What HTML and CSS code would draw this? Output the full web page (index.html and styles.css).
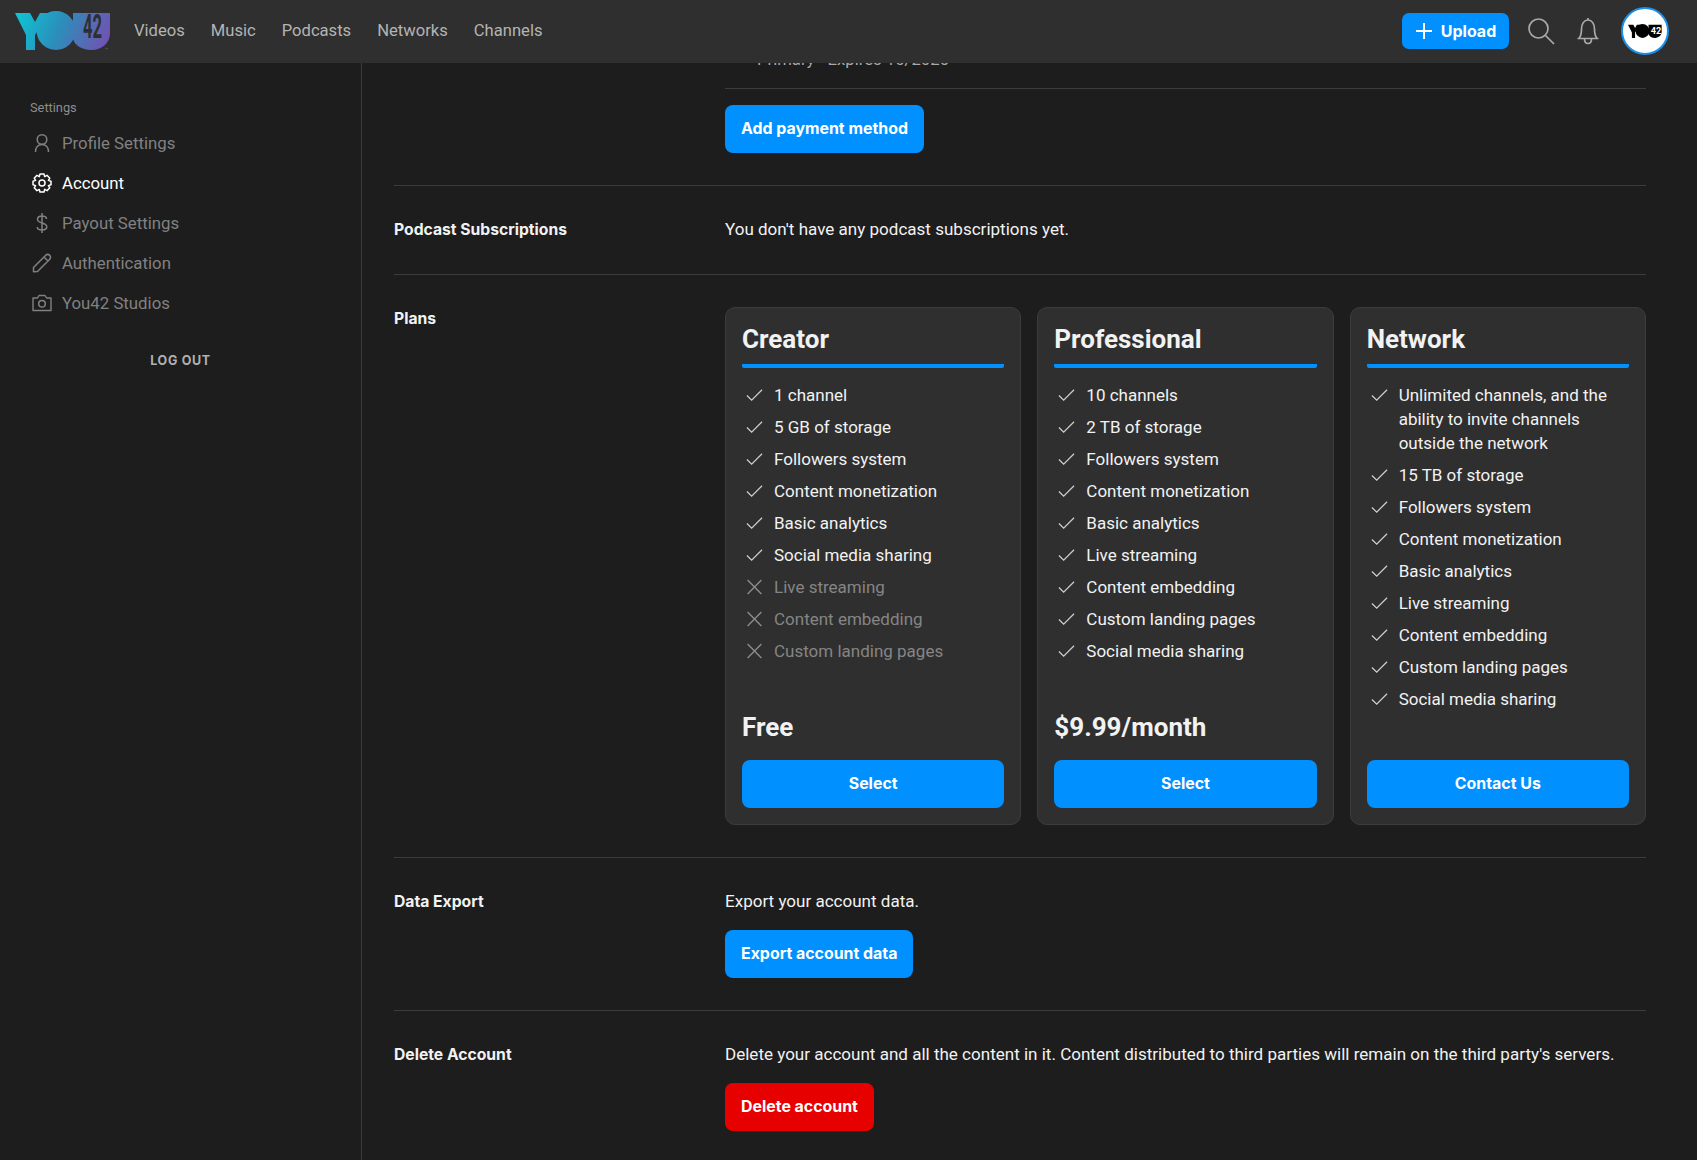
FILE: index.html
```html
<!DOCTYPE html>
<html lang="en">
<head>
<meta charset="utf-8">
<title>Account</title>
<link rel="stylesheet" href="styles.css">
</head>
<body>
<svg class="defs" width="0" height="0" aria-hidden="true">
  <symbol id="check" viewBox="0 0 18 14"><path d="M1 7.5 6 12.5 17 1.5" fill="none" stroke="currentColor" stroke-width="1.3"/></symbol>
  <symbol id="cross" viewBox="0 0 16 16"><path d="M1.5 1.5 14.5 14.5M14.5 1.5 1.5 14.5" fill="none" stroke="currentColor" stroke-width="1.3"/></symbol>
  <symbol id="you" viewBox="0 0 96 40">
    <path d="M0 2H15L20 11 25 2H34L20 24V39H11V24Z"/>
    <circle cx="41" cy="19.5" r="19.5"/>
    <path d="M58 2H95V22C95 32 87 39 76 39 68 39 60 35 58 28Z"/>
  </symbol>
</svg>
<header class="topbar">
  <a class="logo" href="#" aria-label="You42">
    <svg width="96" height="50" viewBox="0 -8 96 50">
      <defs><linearGradient id="lg" gradientUnits="userSpaceOnUse" x1="0" y1="0" x2="96" y2="40"><stop offset="0" stop-color="#0cc8d6"/><stop offset="0.45" stop-color="#2b8fbb"/><stop offset="1" stop-color="#7a4bb0"/></linearGradient></defs>
      <use href="#you" width="96" height="40" fill="url(#lg)"/>
      <text class="logo-num" x="68" y="27" textLength="19" lengthAdjust="spacingAndGlyphs">42</text>
      <text class="logo-tm" x="90" y="40">™</text>
    </svg>
  </a>
  <nav class="topnav">
    <a href="#">Videos</a>
    <a href="#">Music</a>
    <a href="#">Podcasts</a>
    <a href="#">Networks</a>
    <a href="#">Channels</a>
  </nav>
  <div class="top-actions">
    <a class="upload" href="#">
      <svg width="18" height="18" viewBox="0 0 18 18"><path d="M9 1V17M1 9H17" stroke="#fff" stroke-width="2" fill="none"/></svg>
      Upload
    </a>
    <svg class="top-icon" width="28" height="28" viewBox="0 0 28 28"><circle cx="11.5" cy="11.5" r="9.500" fill="none" stroke="#aaa" stroke-width="1.700"/><path d="M18.500 18.500 27 27" stroke="#aaa" stroke-width="1.700" fill="none"/></svg>
    <svg class="top-icon" width="24" height="28" viewBox="0 0 24 28"><path d="M3 21.500C5 19 5.500 16 5.500 12 5.500 7 8 3 12 3S18.500 7 18.500 12C18.500 16 19 19 21 21.500ZM1.500 21.500H22.500M8.500 22C8.500 25 10 26.500 12 26.500S15.500 25 15.500 22M12 1V3" fill="none" stroke="#aaa" stroke-width="1.700"/></svg>
    <div class="avatar">
      <svg width="34" height="15" viewBox="0 0 96 42"><use href="#you" width="96" height="40" fill="#000"/><text class="avatar-num" x="64" y="28">42</text></svg>
    </div>
  </div>
</header>
<div class="shell">
  <aside class="sidebar">
    <div class="side-title">Settings</div>
    <ul class="side-list">
      <li><svg width="20" height="20" viewBox="0 0 20 20"><circle cx="10" cy="6.500" r="4.800" fill="none" stroke="currentColor" stroke-width="1.500"/><path d="M3.500 19C3.500 14.500 6 11.500 10 11.500S16.500 14.500 16.500 19" fill="none" stroke="currentColor" stroke-width="1.500"/></svg>Profile Settings</li>
      <li class="active"><svg width="20" height="20" viewBox="0 0 20 20"><circle cx="10" cy="10" r="3" fill="none" stroke="currentColor" stroke-width="1.500"/><path d="M8 1H12L12.700 3.600 15 2.300 17.800 5.200 16.400 7.400 19 8.200V11.800L16.400 12.600 17.800 14.800 15 17.700 12.700 16.400 12 19H8L7.300 16.400 5 17.700 2.200 14.800 3.600 12.600 1 11.800V8.200L3.600 7.400 2.200 5.200 5 2.300 7.300 3.600Z" fill="none" stroke="currentColor" stroke-width="1.500" stroke-linejoin="round"/></svg>Account</li>
      <li><svg width="20" height="20" viewBox="0 0 20 20"><path d="M14.500 6C14.500 4 12.500 3 10 3S5.500 4.200 5.500 6.300 7.500 9.300 10 10 14.800 11.500 14.800 13.800 12.500 17 10 17 5.300 16 5.300 14M10 0V20" fill="none" stroke="currentColor" stroke-width="1.500"/></svg>Payout Settings</li>
      <li><svg width="20" height="20" viewBox="0 0 20 20"><path d="M1.500 14.500 13.500 2.500C14.800 1.200 16.500 1.200 17.700 2.400S18.800 5.200 17.500 6.500L5.500 18.500 1.500 18.800ZM12 4 16 8" fill="none" stroke="currentColor" stroke-width="1.500" stroke-linejoin="round"/></svg>Authentication</li>
      <li><svg width="20" height="20" viewBox="0 0 20 20"><path d="M1 5H5.500L7 2.500H13L14.500 5H19V17.500H1Z" fill="none" stroke="currentColor" stroke-width="1.400" stroke-linejoin="round"/><circle cx="10" cy="10.800" r="3.300" fill="none" stroke="currentColor" stroke-width="1.500"/></svg>You42 Studios</li>
    </ul>
    <a class="logout" href="#">LOG OUT</a>
  </aside>
  <main class="main">
    <div class="payment-tail">
      <div class="card-meta">Primary - Expires 10/2025</div>
      <div class="tail-rule"></div>
      <a class="btn" href="#">Add payment method</a>
    </div>
    <section class="row">
      <h3 class="row-label">Podcast Subscriptions</h3>
      <div class="row-body"><p class="row-text">You don't have any podcast subscriptions yet.</p></div>
    </section>
    <section class="row">
      <h3 class="row-label">Plans</h3>
      <div class="row-body plans">
        <article class="plan">
          <h2 class="plan-name">Creator</h2>
          <ul class="features">
            <li><svg class="ico"><use href="#check"/></svg>1 channel</li>
            <li><svg class="ico"><use href="#check"/></svg>5 GB of storage</li>
            <li><svg class="ico"><use href="#check"/></svg>Followers system</li>
            <li><svg class="ico"><use href="#check"/></svg>Content monetization</li>
            <li><svg class="ico"><use href="#check"/></svg>Basic analytics</li>
            <li><svg class="ico"><use href="#check"/></svg>Social media sharing</li>
            <li class="off"><svg class="ico"><use href="#cross"/></svg>Live streaming</li>
            <li class="off"><svg class="ico"><use href="#cross"/></svg>Content embedding</li>
            <li class="off"><svg class="ico"><use href="#cross"/></svg>Custom landing pages</li>
          </ul>
          <div class="price">Free</div>
          <a class="btn btn-wide" href="#">Select</a>
        </article>
        <article class="plan">
          <h2 class="plan-name">Professional</h2>
          <ul class="features">
            <li><svg class="ico"><use href="#check"/></svg>10 channels</li>
            <li><svg class="ico"><use href="#check"/></svg>2 TB of storage</li>
            <li><svg class="ico"><use href="#check"/></svg>Followers system</li>
            <li><svg class="ico"><use href="#check"/></svg>Content monetization</li>
            <li><svg class="ico"><use href="#check"/></svg>Basic analytics</li>
            <li><svg class="ico"><use href="#check"/></svg>Live streaming</li>
            <li><svg class="ico"><use href="#check"/></svg>Content embedding</li>
            <li><svg class="ico"><use href="#check"/></svg>Custom landing pages</li>
            <li><svg class="ico"><use href="#check"/></svg>Social media sharing</li>
          </ul>
          <div class="price">$9.99/month</div>
          <a class="btn btn-wide" href="#">Select</a>
        </article>
        <article class="plan">
          <h2 class="plan-name">Network</h2>
          <ul class="features">
            <li><svg class="ico"><use href="#check"/></svg><span>Unlimited channels, and the ability to invite channels outside the network</span></li>
            <li><svg class="ico"><use href="#check"/></svg>15 TB of storage</li>
            <li><svg class="ico"><use href="#check"/></svg>Followers system</li>
            <li><svg class="ico"><use href="#check"/></svg>Content monetization</li>
            <li><svg class="ico"><use href="#check"/></svg>Basic analytics</li>
            <li><svg class="ico"><use href="#check"/></svg>Live streaming</li>
            <li><svg class="ico"><use href="#check"/></svg>Content embedding</li>
            <li><svg class="ico"><use href="#check"/></svg>Custom landing pages</li>
            <li><svg class="ico"><use href="#check"/></svg>Social media sharing</li>
          </ul>
          <a class="btn btn-wide" href="#">Contact Us</a>
        </article>
      </div>
    </section>
    <section class="row">
      <h3 class="row-label">Data Export</h3>
      <div class="row-body">
        <p class="row-text">Export your account data.</p>
        <a class="btn" href="#">Export account data</a>
      </div>
    </section>
    <section class="row row-last">
      <h3 class="row-label">Delete Account</h3>
      <div class="row-body">
        <p class="row-text">Delete your account and all the content in it. Content distributed to third parties will remain on the third party's servers.</p>
        <a class="btn btn-danger" href="#">Delete account</a>
      </div>
    </section>
  </main>
</div>
</body>
</html>
```
FILE: styles.css
```css
* { box-sizing: border-box; }
html, body { height: 100%; }
body {
  margin: 0;
  height: 1160px;
  overflow: hidden;
  background: #1d1d1d;
  color: #f2f2f2;
  font-family: Roboto, "Liberation Sans", sans-serif;
  font-size: 17px;
  line-height: 24px;
  display: flex;
  flex-direction: column;
}
a { text-decoration: none; color: inherit; }
ul { list-style: none; margin: 0; padding: 0; }
.defs { position: absolute; }

.topbar {
  height: 63px;
  flex: none;
  background: #2f2f2f;
  display: flex;
  align-items: center;
  padding: 0 28px 1px 15px;
  position: relative;
  z-index: 2;
}
.logo { display: flex; width: 96px; margin-top: -6px; }
.logo-num { font: 700 33px Roboto, sans-serif; fill: #2f2f2f; }
.logo-tm { font: 400 5px Roboto, sans-serif; fill: #777; }
.avatar-num { font: 700 26px Roboto, sans-serif; fill: #fff; }
.topnav { display: flex; gap: 26px; margin-left: 23px; margin-bottom: 1px; }
.topnav a { color: #b4b4b4; font-size: 16.6px; }
.top-actions { margin-left: auto; display: flex; align-items: center; }
.upload {
  width: 107px; height: 36px;
  background: #0090ff;
  border-radius: 7px;
  color: #fff;
  font: 700 16px/36px Inter, sans-serif;
  display: flex; align-items: center; justify-content: center; gap: 8px;
  margin-right: 18px;
}
.top-icon { display: block; }
.top-icon + .top-icon { margin-left: 21px; }
.avatar {
  width: 48px; height: 48px; margin-left: 21px;
  border-radius: 50%;
  background: #fff;
  border: 2px solid #1a8fe8;
  display: flex; align-items: center; justify-content: center;
  overflow: hidden;
}

.shell { flex: 1; display: flex; min-height: 0; }
.sidebar {
  width: 362px; flex: none;
  border-right: 1px solid #3c3c3c;
  padding: 35px 30px 0 30px;
}
.side-title { font-size: 12.8px; line-height: 20px; color: #8d8d8d; margin-bottom: 5px; }
.side-list li {
  display: flex; align-items: center; gap: 10px;
  height: 40px;
  color: #818181;
  font-size: 16.8px;
  padding-left: 2px;
}
.side-list li.active { color: #fff; }
.side-list svg { flex: none; }
.logout {
  display: block; text-align: center;
  margin-top: 28px;
  color: #b0b0b0;
  font: 700 12.5px/20px Inter, sans-serif;
  letter-spacing: .7px;
}

.main { flex: 1; min-width: 0; padding: 0 51px 0 32px; overflow: hidden; }
.payment-tail { padding-left: 331px; margin-top: -15px; padding-bottom: 32px; }
.card-meta { color: #aaa; padding-left: 32px; font-size: 16.7px; }
.tail-rule { height: 1px; background: #3c3c3c; margin: 16px 0 16px; }
.btn {
  display: inline-block;
  height: 48px;
  padding: 0 16px;
  border-radius: 8px;
  background: #0090ff;
  color: #fff;
  font: 700 15.900px/48px Inter, sans-serif;
  text-align: center;
}
.btn-wide { display: block; margin-top: auto; }
.btn-danger { background: #e60000; }

.row {
  display: flex;
  border-top: 1px solid #3c3c3c;
  padding: 32px 0;
}
.row-label {
  width: 331px; flex: none;
  margin: 0;
  font: 700 15.700px/24px Inter, sans-serif;
  color: #f2f2f2;
}
.row-body { flex: 1; min-width: 0; }
.row-text { margin: -1px 0 1px; font-size: 17.050px; }
.row-text + .btn { margin-top: 16px; }

.plans { display: grid; grid-template-columns: repeat(3, 1fr); gap: 16px; }
.plan {
  height: 518px;
  background: #2f2f2f;
  border: 1px solid #3c3c3c;
  border-radius: 10px;
  padding: 16px;
  display: flex;
  flex-direction: column;
}
.plan-name {
  margin: 2px 0 0;
  font: 700 26px/26px Roboto, sans-serif;
  padding-bottom: 12px;
  border-bottom: 4px solid #0090ff;
  border-radius: 0 0 2px 2px;
}
.features { margin-top: 15px; }
.features li {
  display: flex;
  gap: 11px;
  margin-bottom: 8px;
  padding-left: 4px;
}
.features li.off { color: #858585; }
.ico { flex: none; width: 17px; height: 24px; color: #d0d0d0; }
.off .ico { color: #8c8c8c; }
.price { margin-top: auto; font: 700 26px/32px Roboto, sans-serif; margin-bottom: 17px; }
.price + .btn-wide { margin-top: 0; }
```
